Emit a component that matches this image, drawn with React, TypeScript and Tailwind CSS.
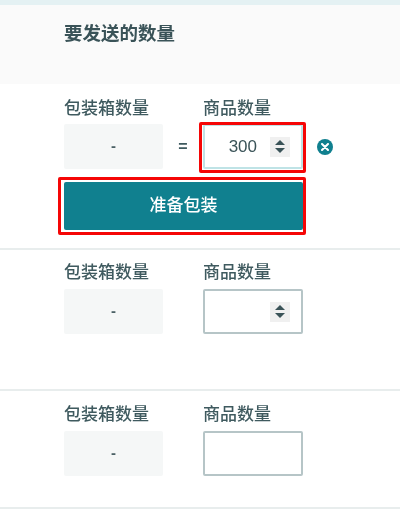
const boxInput = "flex h-[45px] w-[100px] items-center justify-end rounded-[2px] border-2 pr-[11px]";

function Spinner() {
  return (
    <div className="flex h-5 w-5 flex-col items-center justify-center gap-[3px] bg-[#f0f0f0]">
      <svg width="10" height="5" viewBox="0 0 10 5">
        <path d="M5 0 L10 5 L0 5 Z" fill="#3a5358" />
      </svg>
      <svg width="10" height="5" viewBox="0 0 10 5">
        <path d="M0 0 L10 0 L5 5 Z" fill="#3a5358" />
      </svg>
    </div>
  );
}

function Labels() {
  return (
    <div className="flex text-[17px] font-medium leading-[24px] text-[#3f5a5f]">
      <span className="w-[139px]">包装箱数量</span>
      <span>商品数量</span>
    </div>
  );
}

function PackBox() {
  return (
    <div className="flex h-[45px] w-[99px] items-center justify-center rounded-[2px] bg-[#f5f7f7] text-[15px] font-bold text-[#4a6065]">
      -
    </div>
  );
}

export default function App() {
  return (
    <div className="h-[514px] w-[400px] overflow-hidden bg-white blur-[0.5px] font-['Liberation_Sans','Noto_Sans_CJK_SC',sans-serif]">
      <div className="h-[5px] bg-[#e4f1f3]" />

      <div className="h-[79px] bg-[#fafafa] pl-16 pt-[17px] text-[18.5px] font-bold leading-[24px] text-[#3a5358]">
        要发送的数量
      </div>

      {/* Row with value filled in */}
      <div className="h-[166px] border-b-2 border-[#e8eded] pl-16 pt-[13px]">
        <Labels />
        <div className="mt-[3px] flex items-center">
          <PackBox />
          <span className="w-10 text-center text-[16px] font-bold text-[#3f5a5f]">=</span>
          <div className={`relative gap-[13px] border-[#bfe3e6] text-[17px] text-[#3a5358] ${boxInput}`}>
            <span>300</span>
            <Spinner />
            <div className="absolute -bottom-[6px] -left-[6px] -right-[5px] -top-[4px] rounded-[2px] border-[3px] border-[#f50606]" />
          </div>
          <div className="ml-[14px] flex h-4 w-4 items-center justify-center rounded-full bg-[#10808f]">
            <svg width="8" height="8" viewBox="0 0 8 8">
              <path d="M1 1 L7 7 M7 1 L1 7" stroke="#fff" strokeWidth="2" strokeLinecap="round" />
            </svg>
          </div>
        </div>
        <div className="relative mt-[13px] w-[239px]">
          <button className="block h-[48px] w-full rounded-[2px] bg-[#10808f] text-[17px] font-medium text-white">
            准备包装
          </button>
          <div className="absolute -bottom-[5px] -left-[6px] -right-[3px] -top-[5px] rounded-[2px] border-[3px] border-[#f50606]" />
        </div>
      </div>

      <div className="h-[141px] border-b-2 border-[#e8eded] pl-16 pt-[11px]">
        <Labels />
        <div className="mt-[4px] flex items-center">
          <PackBox />
          <div className={`ml-10 border-[#b6c5c7] ${boxInput}`}>
            <Spinner />
          </div>
        </div>
      </div>

      <div className="h-[118px] border-b-2 border-[#e8eded] pl-16 pt-[12px]">
        <Labels />
        <div className="mt-[4px] flex items-center">
          <PackBox />
          <div className={`ml-10 border-[#b6c5c7] ${boxInput}`} />
        </div>
      </div>
    </div>
  );
}
